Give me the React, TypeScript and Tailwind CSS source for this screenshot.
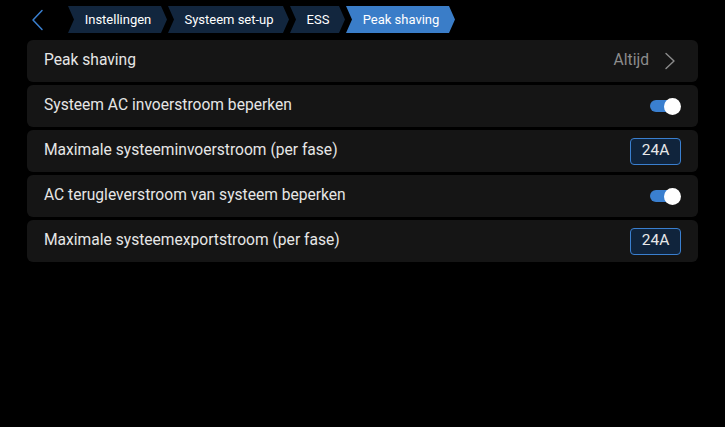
import React from "react";

const crumbs = [
  { label: "Instellingen", w: "w-[99px]", active: false },
  { label: "Systeem set-up", w: "w-[121px]", active: false },
  { label: "ESS", w: "w-[55px]", active: false },
  { label: "Peak shaving", w: "w-[109px]", active: true },
];

function Toggle() {
  return (
    <div className="relative w-[31px] h-[17px] flex items-center">
      <div className="w-[29px] h-[12px] rounded-full bg-[#3a7fcf]" />
      <div className="absolute right-0 top-0 w-[17px] h-[17px] rounded-full bg-white" />
    </div>
  );
}

function Box({ v }: { v: string }) {
  return (
    <div className="w-[51px] h-[27px] rounded-[4px] border-[1.5px] border-[#3a7fcf] bg-[#10243c] flex items-center justify-center text-[15.5px] text-[#e8e8e8]">
      {v}
    </div>
  );
}

function Row({ label, children }: { label: string; children?: React.ReactNode }) {
  return (
    <div className="h-[42px] rounded-[6px] bg-[#151515] flex items-center justify-between pl-[17px] pr-[17px]">
      <span className="text-[15.6px] text-[#e6e6e6]">{label}</span>
      {children}
    </div>
  );
}

export default function App() {
  return (
    <div
      className="w-[725px] h-[427px] bg-black overflow-hidden"
      style={{ fontFamily: "Roboto, 'Liberation Sans', sans-serif" }}
    >
      <div className="flex items-center h-[40px] pt-[6px] pb-[7px]">
        <div className="w-[68px] flex items-center pl-[31px]">
          <svg width="13" height="22" viewBox="0 0 13 22" fill="none">
            <path d="M11 1.5 L2 11 L11 20.5" stroke="#3a7fcf" strokeWidth="1.5" strokeLinecap="round" strokeLinejoin="round" />
          </svg>
        </div>
        <div className="flex gap-[1px] h-[27px]">
          {crumbs.map((c) => (
            <div
              key={c.label}
              className={`${c.w} h-[27px] flex items-center justify-center pl-[1px] text-[13px] text-white [clip-path:polygon(0_0,calc(100%_-_6px)_0,100%_50%,calc(100%_-_6px)_100%,0_100%,6px_50%)] ${
                c.active ? "bg-[#3a7dc8]" : "bg-[#12263e]"
              }`}
            >
              {c.label}
            </div>
          ))}
        </div>
      </div>
      <div className="flex flex-col gap-[3px] pl-[27px] pr-[27px]">
        <Row label="Peak shaving">
          <div className="flex items-center gap-[15px]">
            <span className="text-[15.6px] text-[#8c8c8c]">Altijd</span>
            <svg width="12" height="18" viewBox="0 0 12 18" fill="none" className="mr-[5px]">
              <path d="M2 1.5 L10 9 L2 16.5" stroke="#8c8c8c" strokeWidth="1.4" strokeLinecap="round" strokeLinejoin="round" />
            </svg>
          </div>
        </Row>
        <Row label="Systeem AC invoerstroom beperken">
          <Toggle />
        </Row>
        <Row label="Maximale systeeminvoerstroom (per fase)">
          <Box v="24A" />
        </Row>
        <Row label="AC terugleverstroom van systeem beperken">
          <Toggle />
        </Row>
        <Row label="Maximale systeemexportstroom (per fase)">
          <Box v="24A" />
        </Row>
      </div>
    </div>
  );
}
